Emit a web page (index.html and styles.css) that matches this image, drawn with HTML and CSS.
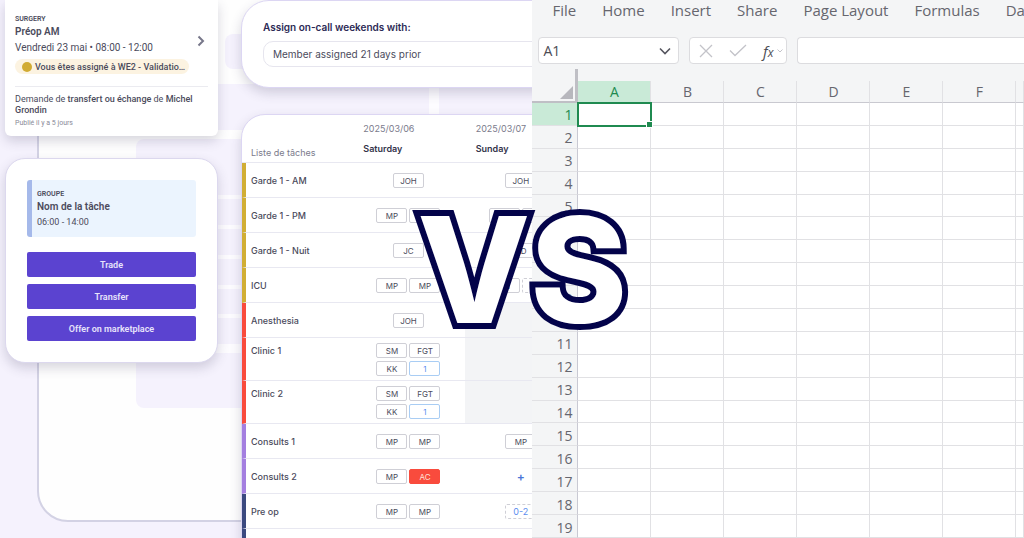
FILE: index.html
```html
<!DOCTYPE html>
<html lang="fr">
<head>
    <meta charset="UTF-8">
    <meta name="viewport" content="width=device-width, initial-scale=1.0">
    <title>Scheduling app VS spreadsheet</title>
    <link rel="stylesheet" href="styles.css">
</head>
<body>
    <main class="compare">
        <section class="app">
            <svg class="backdrop" width="600" height="538" aria-hidden="true">
                <rect x="38" y="-60" width="620" height="581" rx="30" fill="#fefefe" stroke="#d3d2e4" stroke-width="2"/>
                <rect x="225" y="34" width="400" height="35" rx="8" fill="#f5f2fd"/>
                <rect x="210" y="84" width="400" height="46" fill="#f5f2fd"/>
                <rect x="136" y="139" width="400" height="269" rx="8" fill="#f5f2fd"/>
                <rect x="429" y="84" width="10" height="40" fill="#fdfcff"/>
                <g fill="#fdfcff">
                    <rect x="210" y="195" width="60" height="4"/>
                    <rect x="210" y="225" width="60" height="4"/>
                    <rect x="210" y="255" width="60" height="4"/>
                    <rect x="210" y="285" width="60" height="4"/>
                    <rect x="210" y="314" width="60" height="4"/>
                    <rect x="210" y="344" width="60" height="9"/>
                </g>
            </svg>

            <div class="side">
                <article class="card request">
                    <div class="request-top">
                        <div class="request-info">
                            <p class="tag">SURGERY</p>
                            <h2 class="title">Préop AM</h2>
                            <p class="when">Vendredi 23 mai • 08:00 - 12:00</p>
                        </div>
                        <button class="open" aria-label="Ouvrir">
                            <svg width="8" height="12" viewBox="0 0 8 12"><path d="M1.500 1.500 6 6 1.500 10.500" fill="none" stroke="#77778a" stroke-width="2"/></svg>
                        </button>
                    </div>
                    <p class="badge"><span class="dot"></span>Vous êtes assigné à WE2 - Validatio…</p>
                    <div class="request-note">
                        <p class="note">Demande de <b>transfert ou échange</b> de <b>Michel Grondin</b></p>
                        <p class="ago">Publié il y a 5 jours</p>
                    </div>
                </article>

                <article class="card task">
                    <div class="task-info">
                        <p class="tag">GROUPE</p>
                        <h2 class="title">Nom de la tâche</h2>
                        <p class="hours">06:00 - 14:00</p>
                    </div>
                    <button class="action">Trade</button>
                    <button class="action">Transfer</button>
                    <button class="action">Offer on marketplace</button>
                </article>
            </div>

            <div class="boards">
                <div class="panel assign">
                    <label class="assign-label" for="assign">Assign on-call weekends with:</label>
                    <input class="assign-input" id="assign" type="text" value="Member assigned 21 days prior">
                </div>

                <div class="panel">
                    <table class="schedule">
                        <thead>
                            <tr>
                                <th class="list-head">Liste de tâches</th>
                                <th class="day"><span class="date">2025/03/06</span>Saturday</th>
                                <th class="day"><span class="date">2025/03/07</span>Sunday</th>
                            </tr>
                        </thead>
                        <tbody>
                            <tr class="gold">
                                <th>Garde 1 - AM</th>
                                <td><div class="chips"><span class="chip">JOH</span></div></td>
                                <td><div class="chips"><span class="chip">JOH</span></div></td>
                            </tr>
                            <tr class="gold">
                                <th>Garde 1 - PM</th>
                                <td><div class="chips"><span class="chip">MP</span><span class="chip"></span></div></td>
                                <td><div class="chips"><span class="chip"></span><span class="chip"></span></div></td>
                            </tr>
                            <tr class="gold">
                                <th>Garde 1 - Nuit</th>
                                <td><div class="chips"><span class="chip">JC</span></div></td>
                                <td><div class="chips"><span class="chip">AD</span></div></td>
                            </tr>
                            <tr class="gold">
                                <th>ICU</th>
                                <td><div class="chips"><span class="chip">MP</span><span class="chip">MP</span></div></td>
                                <td><div class="chips"><span class="chip">AN</span><span class="chip dashed"></span></div></td>
                            </tr>
                            <tr class="red">
                                <th>Anesthesia</th>
                                <td><div class="chips"><span class="chip">JOH</span></div></td>
                                <td class="off"></td>
                            </tr>
                            <tr class="red tall">
                                <th>Clinic 1</th>
                                <td><div class="chips"><span class="chip">SM</span><span class="chip">FGT</span><span class="chip">KK</span><span class="chip count">1</span></div></td>
                                <td class="off"></td>
                            </tr>
                            <tr class="red tall">
                                <th>Clinic 2</th>
                                <td><div class="chips"><span class="chip">SM</span><span class="chip">FGT</span><span class="chip">KK</span><span class="chip count">1</span></div></td>
                                <td class="off"></td>
                            </tr>
                            <tr class="purple">
                                <th>Consults 1</th>
                                <td><div class="chips"><span class="chip">MP</span><span class="chip">MP</span></div></td>
                                <td><div class="chips"><span class="chip">MP</span></div></td>
                            </tr>
                            <tr class="purple">
                                <th>Consults 2</th>
                                <td><div class="chips"><span class="chip">MP</span><span class="chip alert">AC</span></div></td>
                                <td><div class="chips"><button class="add">+</button></div></td>
                            </tr>
                            <tr class="navy">
                                <th>Pre op</th>
                                <td><div class="chips"><span class="chip">MP</span><span class="chip">MP</span></div></td>
                                <td><div class="chips"><span class="chip dashed range">0-2</span></div></td>
                            </tr>
                            <tr class="navy">
                                <th></th>
                                <td><div class="chips"><span class="chip"></span><span class="chip"></span></div></td>
                                <td><div class="chips"><span class="chip"></span><span class="chip"></span></div></td>
                            </tr>
                        </tbody>
                    </table>
                </div>
            </div>
        </section>

        <section class="sheet" lang="en">
            <nav class="tabs">
                <a href="#">File</a>
                <a href="#">Home</a>
                <a href="#">Insert</a>
                <a href="#">Share</a>
                <a href="#">Page Layout</a>
                <a href="#">Formulas</a>
                <a href="#">Data</a>
            </nav>
            <div class="formula-bar">
                <div class="box name-box">
                    <input class="cell-name" type="text" value="A1" aria-label="Name box">
                    <button aria-label="Show names">
                        <svg width="12" height="8" viewBox="0 0 12 8"><path d="M1 1.500 6 6.500 11 1.500" fill="none" stroke="#55555f" stroke-width="1.600"/></svg>
                    </button>
                </div>
                <div class="box tools">
                    <button aria-label="Cancel">
                        <svg width="14" height="14" viewBox="0 0 14 14"><path d="M1 1 13 13M13 1 1 13" fill="none" stroke="#c3c3c9" stroke-width="1.300"/></svg>
                    </button>
                    <button aria-label="Enter">
                        <svg width="18" height="13" viewBox="0 0 18 13"><path d="M1 6.500 6 11.500 17 1" fill="none" stroke="#c3c3c9" stroke-width="1.300"/></svg>
                    </button>
                    <button class="fx" aria-label="Insert function"><i>f</i><i class="fx-x">x</i>
                        <svg width="6" height="4" viewBox="0 0 6 4"><path d="M0.500 0.500 3 3 5.500 0.500" fill="none" stroke="#c3c3c9"/></svg>
                    </button>
                </div>
                <input class="box formula" type="text" aria-label="Formula">
            </div>
            <div class="grid-wrap">
                <table class="grid">
                    <thead>
                        <tr>
                            <th class="corner"><svg width="13" height="13" viewBox="0 0 13 13"><path d="M13 0V13H0Z" fill="#b7b7bd"/></svg></th>
                            <th class="active">A</th><th>B</th><th>C</th><th>D</th><th>E</th><th>F</th><th class="rest"></th>
                        </tr>
                    </thead>
                    <tbody>
                        <tr><th class="active">1</th><td class="selected"></td><td></td><td></td><td></td><td></td><td></td><td></td></tr>
                        <tr><th>2</th><td></td><td></td><td></td><td></td><td></td><td></td><td></td></tr>
                        <tr><th>3</th><td></td><td></td><td></td><td></td><td></td><td></td><td></td></tr>
                        <tr><th>4</th><td></td><td></td><td></td><td></td><td></td><td></td><td></td></tr>
                        <tr><th>5</th><td></td><td></td><td></td><td></td><td></td><td></td><td></td></tr>
                        <tr><th>6</th><td></td><td></td><td></td><td></td><td></td><td></td><td></td></tr>
                        <tr><th>7</th><td></td><td></td><td></td><td></td><td></td><td></td><td></td></tr>
                        <tr><th>8</th><td></td><td></td><td></td><td></td><td></td><td></td><td></td></tr>
                        <tr><th>9</th><td></td><td></td><td></td><td></td><td></td><td></td><td></td></tr>
                        <tr><th>10</th><td></td><td></td><td></td><td></td><td></td><td></td><td></td></tr>
                        <tr><th>11</th><td></td><td></td><td></td><td></td><td></td><td></td><td></td></tr>
                        <tr><th>12</th><td></td><td></td><td></td><td></td><td></td><td></td><td></td></tr>
                        <tr><th>13</th><td></td><td></td><td></td><td></td><td></td><td></td><td></td></tr>
                        <tr><th>14</th><td></td><td></td><td></td><td></td><td></td><td></td><td></td></tr>
                        <tr><th>15</th><td></td><td></td><td></td><td></td><td></td><td></td><td></td></tr>
                        <tr><th>16</th><td></td><td></td><td></td><td></td><td></td><td></td><td></td></tr>
                        <tr><th>17</th><td></td><td></td><td></td><td></td><td></td><td></td><td></td></tr>
                        <tr><th>18</th><td></td><td></td><td></td><td></td><td></td><td></td><td></td></tr>
                        <tr><th>19</th><td></td><td></td><td></td><td></td><td></td><td></td><td></td></tr>
                    </tbody>
                </table>
            </div>
        </section>

        <h1 class="versus">VS</h1>
    </main>
</body>
</html>
```
FILE: styles.css
```css
* {
    box-sizing: border-box;
}

body {
    margin: 0;
    font-family: 'Inter', sans-serif;
    color: #4b4b5c;
}

h1, h2, p {
    margin: 0;
}

button {
    padding: 0;
    border: none;
    background: none;
    font-family: inherit;
    cursor: pointer;
}

.compare {
    position: relative;
    display: flex;
    height: 100vh;
    overflow: hidden;
}

/* Scheduling app */
.app {
    position: relative;
    flex: 0 0 52%;
    display: flex;
    overflow: hidden;
    background: #f5f2fd;
}

.backdrop {
    position: absolute;
    top: 0;
    left: 0;
}

.side {
    position: relative;
    flex: 0 0 241px;
    display: flex;
    flex-direction: column;
    align-items: flex-start;
    gap: 22px;
    padding-left: 5px;
    font-family: 'Roboto', sans-serif;
}

.card {
    width: 213px;
    background: #fff;
    box-shadow: 0 5px 12px rgba(60, 55, 90, 0.2);
}

.request {
    padding: 14px 10px 8px;
    border-radius: 0 0 6px 6px;
}

.request-top {
    display: flex;
    justify-content: space-between;
    align-items: center;
}

.open {
    padding: 14px 3px 0;
}

.tag {
    font-size: 7px;
    line-height: 10px;
    font-weight: 600;
}

.title {
    font-size: 10px;
    line-height: 16px;
    font-weight: 600;
}

.when {
    font-size: 10px;
    line-height: 16px;
}

.badge {
    display: flex;
    align-items: center;
    gap: 3px;
    width: 174px;
    height: 15px;
    margin-top: 3px;
    padding-left: 7px;
    border-radius: 8px;
    background: #fcf3e1;
    font-size: 9px;
    font-weight: 500;
    white-space: nowrap;
}

.dot {
    width: 10px;
    height: 10px;
    border-radius: 50%;
    background: #d1ab33;
}

.request-note {
    margin-top: 12px;
    padding-top: 7px;
    border-top: 1px solid #ebebf0;
}

.note {
    font-size: 9px;
    line-height: 11px;
}

.note b {
    font-weight: 500;
}

.ago {
    margin-top: 2px;
    font-size: 7px;
    line-height: 10px;
    color: #8a8a98;
}

.task {
    display: flex;
    flex-direction: column;
    gap: 7px;
    padding: 21px;
    border: 1px solid #dcd8ee;
    border-radius: 20px;
}

.task-info {
    margin-bottom: 8px;
    padding: 9px 10px 8px 5px;
    border-left: 5px solid #a5b9ea;
    border-radius: 3px;
    background: #ebf4fe;
}

.hours {
    font-size: 9px;
    line-height: 14px;
}

.action {
    height: 25px;
    border-radius: 2px;
    background: #5b43d0;
    color: #e8e4fb;
    font-size: 9px;
    font-weight: 600;
}

.boards {
    position: relative;
    flex: 1 0 auto;
    display: flex;
    flex-direction: column;
    gap: 26px;
}

.panel {
    width: 337px;
    border: 1px solid #dcd6f3;
    border-radius: 24px 0 0 0;
    background: #fff;
    box-shadow: 0 5px 12px rgba(60, 55, 90, 0.2);
}

.assign {
    display: flex;
    flex-direction: column;
    gap: 6px;
    padding: 18px 0 20px 21px;
    border-radius: 28px 0 0 28px;
}

.assign-label {
    font-size: 10px;
    line-height: 16px;
    font-weight: 600;
    color: #2c2a55;
}

.assign-input {
    height: 26px;
    padding: 0 9px;
    border: 1px solid #e6e5ee;
    border-radius: 10px;
    font-family: inherit;
    font-size: 10px;
    color: #4b4b5c;
}

.schedule {
    width: 100%;
    table-layout: fixed;
    border-collapse: separate;
    border-spacing: 0;
    font-size: 9px;
}

.schedule th,
.schedule td {
    height: 35px;
    padding: 0;
    border-bottom: 1px solid #e8e8f1;
    text-align: left;
    font-weight: 400;
}

.schedule tbody th {
    padding-left: 5px;
    border-left: 4px solid;
    font-weight: 500;
}

.schedule thead th {
    height: 48px;
    vertical-align: bottom;
}

.schedule .list-head {
    width: 110px;
    padding: 0 0 4px 9px;
    color: #7b7b8c;
}

.schedule .day {
    width: 112px;
    padding: 0 0 5px 11px;
    line-height: 16px;
    font-weight: 600;
    color: #33334a;
}

.schedule .date {
    display: block;
    margin-bottom: 4px;
    font-weight: 400;
    color: #7b7b8c;
}

.schedule .tall th,
.schedule .tall td {
    height: 43px;
}

.schedule .tall th {
    padding-top: 7px;
    vertical-align: top;
}

.schedule .gold th {
    border-left-color: #d1ae35;
}

.schedule .red th {
    border-left-color: #f94b3d;
}

.schedule .purple th {
    border-left-color: #a47fe0;
}

.schedule .navy th {
    border-left-color: #3c4a80;
}

.schedule .off {
    background: #f3f4f6;
}

.chips {
    display: flex;
    flex-wrap: wrap;
    justify-content: center;
    gap: 3px 2px;
    padding: 0 20px;
}

.chip {
    flex: 0 0 31px;
    height: 15px;
    border: 1px solid #cfcfd6;
    border-radius: 2px;
    background: #fff;
    text-align: center;
    font-size: 8px;
    line-height: 14px;
}

.chip.count {
    border-color: #a9cdf4;
    color: #5b8def;
}

.chip.alert {
    border-color: #f94b3d;
    background: #f94b3d;
    color: #ffe3d8;
}

.chip.dashed {
    border-style: dashed;
}

.chip.range {
    font-size: 9px;
    color: #5b8def;
}

.add {
    color: #4a76d8;
    font-size: 12px;
    font-weight: 600;
}

/* Spreadsheet */
.sheet {
    flex: 1;
    display: flex;
    flex-direction: column;
    min-width: 0;
    overflow: hidden;
    background: #f4f5f6;
    font-family: 'Open Sans', sans-serif;
    color: #66666e;
}

.tabs {
    display: flex;
    gap: 26px;
    height: 37px;
    padding-left: 20px;
    white-space: nowrap;
}

.tabs a {
    color: inherit;
    font-size: 15px;
    line-height: 20px;
    text-decoration: none;
}

.formula-bar {
    display: flex;
    gap: 10px;
    padding-left: 6px;
}

.box {
    display: flex;
    align-items: center;
    height: 27px;
    border: 1px solid #dcdcdf;
    border-radius: 4px;
    background: #fff;
}

.name-box {
    flex: 0 0 141px;
    min-width: 0;
    padding: 0 7px 0 4px;
}

.cell-name {
    flex: 1;
    width: 100%;
    min-width: 0;
    padding: 0;
    border: none;
    font-family: inherit;
    font-size: 14px;
    color: #4c4c54;
}

.tools {
    flex: 0 0 98px;
    justify-content: space-between;
    padding: 0 3px 0 9px;
}

.tools button,
.name-box button {
    display: flex;
    align-items: center;
}

.fx {
    font-size: 15px;
    color: #4c4c54;
}

.fx-x {
    padding-top: 4px;
    font-size: 12px;
}

.fx svg {
    margin-left: 4px;
}

.formula {
    flex: 1;
    min-width: 0;
    border-right: none;
    border-radius: 4px 0 0 4px;
}

.grid-wrap {
    flex: 1;
    padding-top: 17px;
}

.grid {
    width: 100%;
    height: 100%;
    table-layout: fixed;
    border-collapse: separate;
    border-spacing: 0;
    background: #fff;
}

.grid th,
.grid td {
    padding: 0;
    border-right: 1px solid #e1e1e4;
    border-bottom: 1px solid #e1e1e4;
}

.grid thead th {
    width: 73px;
    height: 22px;
    border-bottom-color: #c9c9d0;
    background: #f4f5f6;
    font-size: 14px;
    line-height: 20px;
    font-weight: 400;
}

.grid tbody th {
    padding: 3px 5px 0 0;
    border-right-color: #c9c9d3;
    background: #f4f5f6;
    text-align: right;
    font-size: 14px;
    line-height: 18px;
    font-weight: 400;
}

.grid thead .corner {
    position: relative;
    width: 46px;
    padding-right: 2px;
    border-right: 3px solid #bfbfc5;
    border-bottom: 2px solid #bfbfc5;
    text-align: right;
    line-height: 16px;
}

/* freeze handle rising above the header row */
.grid .corner::before {
    content: '';
    position: absolute;
    top: -12px;
    right: -3px;
    width: 3px;
    height: 12px;
    background: #bfbfc5;
}

.grid .corner svg {
    display: inline-block;
    vertical-align: middle;
}

.grid thead .rest {
    width: auto;
}

.grid thead .active,
.grid tbody .active {
    background: #c9ead7;
    color: #1f8a50;
}

.selected {
    position: relative;
    outline: 2px solid #1f8a50;
    outline-offset: -1px;
}

.selected::after {
    content: '';
    position: absolute;
    right: -3px;
    bottom: -3px;
    width: 5px;
    height: 5px;
    border: 1px solid #fff;
    box-sizing: content-box;
    background: #1f8a50;
}

/* Title over both halves, outlined on the outside of the letters */
.versus {
    position: absolute;
    top: 50%;
    left: 51%;
    transform: translate(-50%, -50%);
    font-size: 147px;
    line-height: 1;
    font-weight: 800;
    color: #fff;
    -webkit-text-stroke: 12px #03034a;
    paint-order: stroke fill;
}
```
